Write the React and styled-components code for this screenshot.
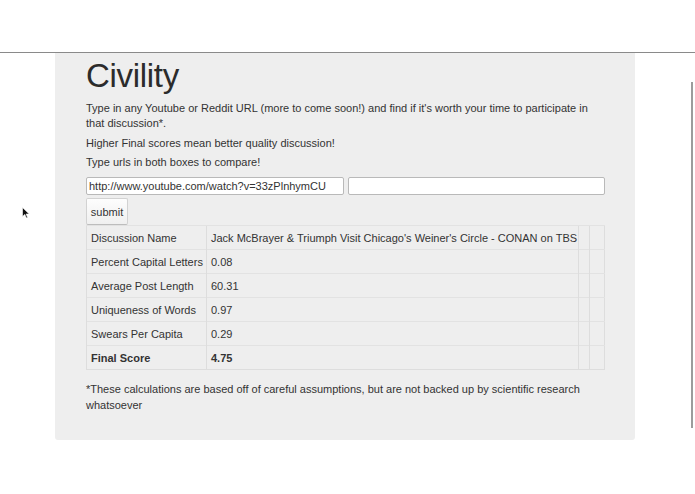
import React from 'react'
import styled, { createGlobalStyle } from 'styled-components'

const GlobalStyle = createGlobalStyle`
  html, body {
    margin: 0;
    padding: 0;
    background: #fff;
  }
  body {
    font-family: "Liberation Sans", Arial, sans-serif;
    color: #333;
    overflow: hidden;
  }
`

const Page = styled.div`
  width: 695px;
  height: 494px;
  position: relative;
  overflow: hidden;
`

const TopBar = styled.div`
  height: 52px;
  border-bottom: 1px solid #8a8a8a;
`

const Panel = styled.div`
  margin-left: 55px;
  width: 580px;
  height: 387px;
  box-sizing: border-box;
  padding: 3px 31px 0 31px;
  background: #eeeeee;
  border-radius: 0 0 3px 3px;
`

const Title = styled.h1`
  margin: 0;
  font-size: 33px;
  font-weight: 400;
  line-height: 40px;
  letter-spacing: -0.3px;
  color: #2b2b2b;
`

const Text = styled.p`
  margin: ${p => p.$top || 0}px 0 0 0;
  font-size: 11px;
  line-height: 15px;
  color: #333;
`

const InputRow = styled.div`
  display: flex;
  gap: 4px;
  margin-top: 7px;
  width: 519px;
`

const UrlInput = styled.input`
  flex: 1;
  min-width: 0;
  height: 18px;
  box-sizing: border-box;
  border: 1px solid #b9b9b9;
  border-radius: 2px;
  background: #fff;
  padding: 0 2px;
  font-family: "Liberation Sans", Arial, sans-serif;
  font-size: 11px;
  color: #333;
  outline: none;
`

const SubmitButton = styled.button`
  display: block;
  margin-top: 3px;
  height: 27px;
  width: 42px;
  padding: 0;
  box-sizing: border-box;
  border: 1px solid #d2d2d2;
  border-bottom-color: #bdbdbd;
  border-radius: 2px;
  background: linear-gradient(#fdfdfd, #f0f0f0);
  font-family: "Liberation Sans", Arial, sans-serif;
  font-size: 11px;
  color: #333;
`

const Table = styled.table`
  width: 519px;
  table-layout: fixed;
  border-collapse: collapse;
  border: 1px solid #dddddd;
  font-size: 11px;
  color: #333;
`

const Col = styled.col`
  width: ${p => p.$w}px;
`

const Cell = styled.td`
  height: 24px;
  box-sizing: border-box;
  padding: 0 4px;
  border-top: 1px solid #e2e2e2;
  border-left: 1px solid #dddddd;
  font-weight: ${p => (p.$bold ? 700 : 400)};
  white-space: nowrap;
  overflow: hidden;
`

const Footnote = styled(Text)`
  margin-top: 11px;
  line-height: 16px;
`

const Scrollbar = styled.div`
  position: absolute;
  right: 2px;
  top: 82px;
  width: 2px;
  height: 346px;
  background: #9c9c9c;
`

const Cursor = styled.svg`
  position: absolute;
  left: 22px;
  top: 207px;
`

const rows = [
  ['Discussion Name', "Jack McBrayer & Triumph Visit Chicago's Weiner's Circle - CONAN on TBS"],
  ['Percent Capital Letters', '0.08'],
  ['Average Post Length', '60.31'],
  ['Uniqueness of Words', '0.97'],
  ['Swears Per Capita', '0.29'],
]

export default function App() {
  return (
    <Page>
      <GlobalStyle />
      <TopBar />
      <Panel>
        <Title>Civility</Title>
        <Text $top={5}>
          Type in any Youtube or Reddit URL (more to come soon!) and find if it's worth your time to participate in
          that discussion*.
        </Text>
        <Text $top={5}>Higher Final scores mean better quality discussion!</Text>
        <Text $top={4}>Type urls in both boxes to compare!</Text>
        <InputRow>
          <UrlInput defaultValue="http://www.youtube.com/watch?v=33zPlnhymCU" />
          <UrlInput defaultValue="" />
        </InputRow>
        <SubmitButton>submit</SubmitButton>
        <Table>
          <colgroup>
            <Col $w={120} />
            <Col $w={372} />
            <Col $w={11} />
            <Col $w={15} />
          </colgroup>
          <tbody>
            {rows.map(([label, value]) => (
              <tr key={label}>
                <Cell>{label}</Cell>
                <Cell>{value}</Cell>
                <Cell />
                <Cell />
              </tr>
            ))}
            <tr>
              <Cell $bold>Final Score</Cell>
              <Cell $bold>4.75</Cell>
              <Cell />
              <Cell />
            </tr>
          </tbody>
        </Table>
        <Footnote>
          *These calculations are based off of careful assumptions, but are not backed up by scientific research
          whatsoever
        </Footnote>
      </Panel>
      <Scrollbar />
      <Cursor width="8" height="12" viewBox="0 0 8 12">
        <path d="M0.5 0.5 L0.5 9.5 L2.8 7.4 L4.4 11 L5.6 10.4 L4.1 7 L7.2 7 Z" fill="#111" stroke="#fff" strokeWidth="0.6" />
      </Cursor>
    </Page>
  )
}
